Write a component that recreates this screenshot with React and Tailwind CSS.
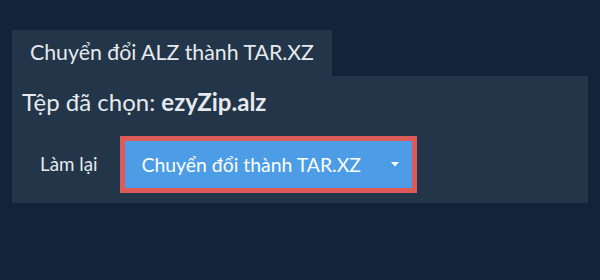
export default function App() {
  return (
    <div className="min-h-[280px] w-[600px] bg-[#13243a] pt-[30px] px-3 text-[#e6e9ee]" style={{ fontFamily: "Lato, 'Noto Sans', sans-serif" }}>
      <div className="flex">
        <div className="bg-[#223549] h-[46px] px-[18px] flex items-center text-[21.3px]">
          Chuyển đổi ALZ thành TAR.XZ
        </div>
      </div>
      <div className="bg-[#223549] h-[127px] px-[10px] pt-[10px]">
        <p className="text-[24px] leading-[32px]">
          Tệp đã chọn: <span className="font-bold">ezyZip.alz</span>
        </p>
        <div className="flex items-center mt-[18px]">
          <button className="text-[18.8px] px-[18px] h-[57px]">Làm lại</button>
          <div className="ml-[4px] border-[5px] border-[#dc5b58] bg-[#4c9ce6] h-[57px] w-[297px] flex items-center pl-[17px] pr-[13px] text-[19.4px] text-white">
            <span className="flex-1">Chuyển đổi thành TAR.XZ</span>
            <svg width="8" height="5" viewBox="0 0 8 5"><path d="M0 0h8L4 4.5z" fill="#fff" /></svg>
          </div>
        </div>
      </div>
    </div>
  );
}
